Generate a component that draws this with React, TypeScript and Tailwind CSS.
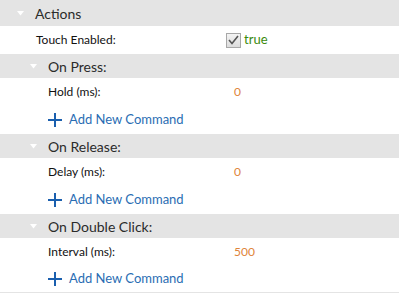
import React from "react";

const Tri: React.FC = () => (
  <svg width="7" height="5" viewBox="0 0 7 5" className="shrink-0">
    <path d="M0 0 L7 0 L3.5 4.5 Z" fill="#ffffff" />
  </svg>
);

const Header: React.FC<{ label: string; indent: number; h: string }> = ({ label, indent, h }) => (
  <div className={`flex items-center bg-[#e4e4e4] ${h}`} style={{ paddingLeft: indent }}>
    <Tri />
    <span className="ml-[11px] text-[14px] text-[#2b2b2b]">{label}</span>
  </div>
);

const Row: React.FC<{ label: string; value: string }> = ({ label, value }) => (
  <div className="flex items-center h-[28px]">
    <span className="text-[12px] text-[#111111] pl-[48px] w-[234px]">{label}</span>
    <span className="text-[12px] text-[#e0843a]">{value}</span>
  </div>
);

const AddCmd: React.FC<{ h?: string }> = ({ h = "h-[28px]" }) => (
  <div className={`flex items-center pl-[48px] ${h}`}>
    <svg width="14" height="14" viewBox="0 0 14 14" className="shrink-0">
      <path d="M7 0 V14 M0 7 H14" stroke="#1a5fae" strokeWidth="2" />
    </svg>
    <span className="ml-[7px] text-[13px] text-[#2a6db3]">Add New Command</span>
  </div>
);

const App: React.FC = () => {
  return (
    <div className="w-[399px] h-[294px] bg-white overflow-hidden font-['Lato','Noto_Sans',sans-serif]">
      <Header label="Actions" indent={17} h="h-[26px]" />
      <div className="flex items-center h-[28px]">
        <span className="text-[12px] text-[#111111] pl-[36px] w-[226px]">Touch Enabled:</span>
        <span className="w-[15px] h-[15px] border border-[#a8a8a8] bg-gradient-to-b from-[#f4f4f4] to-[#dcdcdc] flex items-center justify-center">
          <svg width="11" height="10" viewBox="0 0 11 10">
            <path d="M1 5 L4 8.5 L10 1" stroke="#555555" strokeWidth="1.6" fill="none" />
          </svg>
        </span>
        <span className="ml-[3px] text-[13px] text-[#3b8a0c]">true</span>
      </div>

      <Header label="On Press:" indent={30} h="h-[24px]" />
      <Row label="Hold (ms):" value="0" />
      <AddCmd />

      <Header label="On Release:" indent={30} h="h-[24px]" />
      <Row label="Delay (ms):" value="0" />
      <AddCmd />

      <Header label="On Double Click:" indent={30} h="h-[24px]" />
      <Row label="Interval (ms):" value="500" />
      <AddCmd h="h-[27px] border-b border-[#e4e4e4]" />
    </div>
  );
};

export default App;
